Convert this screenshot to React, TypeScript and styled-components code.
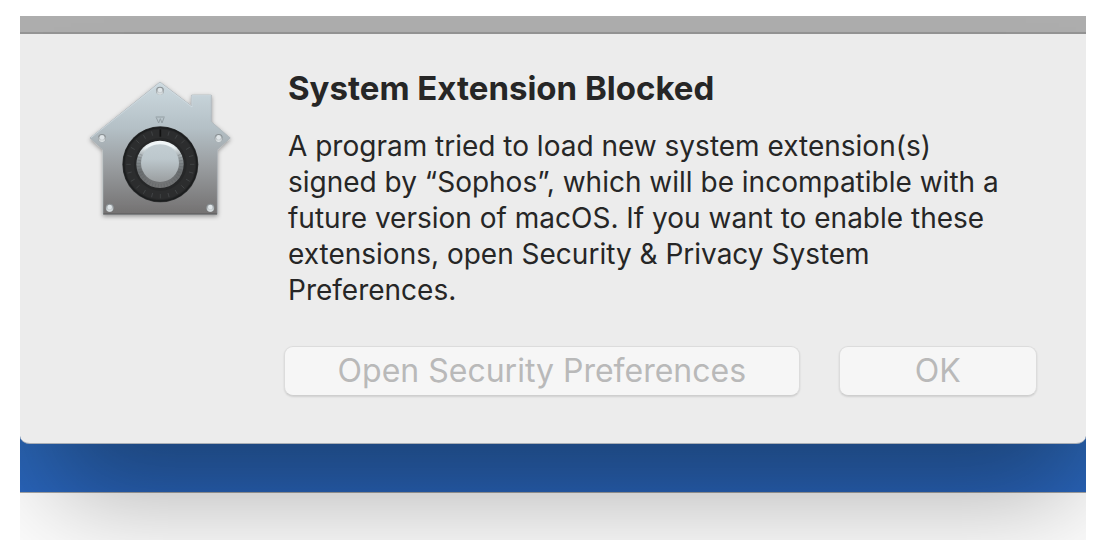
import React from "react";
import styled, { createGlobalStyle } from "styled-components";

const GlobalStyle = createGlobalStyle`
  body {
    margin: 0;
    background: #fff;
    font-family: Inter, "Liberation Sans", sans-serif;
  }
  * { box-sizing: border-box; }
`;

const Page = styled.main`
  padding: 16px 24px 12px 20px;
`;

const Desktop = styled.div`
  display: flex;
  flex-direction: column;
  overflow: hidden;
`;

const TitleBar = styled.div`
  height: 18px;
  background: #adadad;
  border-bottom: 2px solid #949494;
`;

const Dialog = styled.section`
  position: relative;
  z-index: 1;
  display: flex;
  gap: 44px;
  padding: 34px 49px 47px 60px;
  background: #ececec;
  border-bottom: 1px solid #a9aeb6;
  border-radius: 0 0 10px 10px / 0 0 8px 8px;
  box-shadow: 12px 76px 100px -22px rgba(0, 0, 0, 0.31);
`;

const HouseIcon = styled.svg`
  flex: none;
  width: 160px;
  height: 160px;
  margin-top: 2px;
`;

const Content = styled.div`
  flex: 1;
  min-width: 0;
`;

const Title = styled.h1`
  margin: 0;
  padding: 0 4px;
  font-size: 33px;
  line-height: 40px;
  font-weight: 700;
  color: #262626;
`;

const Message = styled.p`
  margin: 20px 0 0;
  padding: 0 24px 0 4px;
  font-size: 28px;
  line-height: 36px;
  color: #262626;
`;

const Actions = styled.div`
  display: grid;
  grid-template-columns: 13fr 5fr;
  gap: 39px;
  margin-top: 38px;
`;

const PushButton = styled.button`
  height: 50px;
  padding: 0;
  border: 1px solid #dcdcdc;
  border-bottom-color: #cfcfcf;
  border-radius: 9px;
  background: #f6f6f6;
  box-shadow: 0 1px 2px rgba(0, 0, 0, 0.12);
  font-family: inherit;
  font-size: 32px;
  line-height: 40px;
  color: #b9b9b9;
`;

const BlueBand = styled.div`
  height: 58px;
  margin-top: -10px;
  background: linear-gradient(#2962ae, #2964ba);
`;

const LowerPane = styled.div`
  height: 48px;
  border-top: 1px solid #a6a6a6;
  background: #fdfdfd;
`;

const ticks = Array.from({ length: 24 }, (_, i) => i * 15);
const rivets = [[240, 62], [66, 204], [416, 204], [89, 413], [391, 413]];

function SecurityHouse() {
  return (
    <HouseIcon viewBox="0 0 480 480" role="img" aria-label="Security">
      <defs>
        <linearGradient id="plate" x1="0" y1="0" x2="0" y2="1">
          <stop offset="0" stopColor="#cddae0" />
          <stop offset="0.35" stopColor="#b4c0c6" />
          <stop offset="0.62" stopColor="#9b9fa2" />
          <stop offset="1" stopColor="#737171" />
        </linearGradient>
        <linearGradient id="knob" x1="0" y1="0" x2="0" y2="1">
          <stop offset="0" stopColor="#c3ced3" />
          <stop offset="0.4" stopColor="#bcc7cc" />
          <stop offset="1" stopColor="#9a9ea0" />
        </linearGradient>
        <linearGradient id="rim" x1="0" y1="0" x2="0" y2="1">
          <stop offset="0" stopColor="#f8fcfd" />
          <stop offset="0.16" stopColor="#dbe3e6" />
          <stop offset="0.4" stopColor="#8c9396" />
          <stop offset="0.65" stopColor="#6a6e70" />
          <stop offset="1" stopColor="#747576" />
        </linearGradient>
        <linearGradient id="rivet" x1="0" y1="0" x2="0" y2="1">
          <stop offset="0" stopColor="#8b9295" />
          <stop offset="0.5" stopColor="#b4babd" />
          <stop offset="1" stopColor="#e4eaec" />
        </linearGradient>
        <filter id="drop" x="-10%" y="-10%" width="120%" height="125%">
          <feDropShadow dx="0" dy="5" stdDeviation="6" floodOpacity="0.38" />
        </filter>
      </defs>
      <path
        d="M240 36 L335 108 V75 H394 V155 L451 204 L412 239 V433 H69 V239 L30 204 Z"
        fill="url(#plate)"
        stroke="#a7afb3"
        strokeWidth="2"
        filter="url(#drop)"
      />
      <path d="M33 203 L240 39 L336 111 V77 H393" fill="none" stroke="#d5e0e5" strokeWidth="2" />
      <path d="M70 432 H411" stroke="#555454" strokeWidth="3" />
      <path d="M227 141 H254 M229 143 L236 159 L241 146 L246 159 L252 143" fill="none" stroke="#939ea3" strokeWidth="3" />
      {rivets.map(([x, y]) => (
        <g key={`${x}-${y}`}>
          <circle cx={x} cy={y} r="12" fill="#899093" />
          <circle cx={x} cy={y + 1} r="11" fill="url(#rivet)" />
          <circle cx={x} cy={y - 2} r="7" fill="#dfe5e8" />
        </g>
      ))}
      <circle cx="241" cy="283" r="114" fill="#303132" />
      <circle cx="241" cy="283" r="110" fill="#262728" stroke="#1b1d1e" strokeWidth="4" />
      <circle cx="241" cy="283" r="92" fill="none" stroke="#2c2d2e" strokeWidth="26" />
      {ticks.map((angle) => (
        <path
          key={angle}
          d={angle === 0 ? "M241 178 V200" : "M241 181 V194"}
          stroke={angle === 0 ? "#111" : "#484b4d"}
          strokeWidth={angle === 0 ? 5 : 2}
          transform={`rotate(${angle} 241 283)`}
        />
      ))}
      <circle cx="240" cy="283" r="71" fill="url(#rim)" />
      <path
        d="M184 253 A64 64 0 1 0 296 253"
        fill="none"
        stroke="#555a5c"
        strokeOpacity="0.3"
        strokeWidth="11"
        strokeDasharray="3 6"
      />
      <circle cx="240" cy="279" r="57" fill="url(#knob)" />
      <path d="M190 240 A64 64 0 0 1 290 240 A82 82 0 0 0 190 240" fill="#f1f7f9" />
    </HouseIcon>
  );
}

export default function App() {
  return (
    <Page>
      <GlobalStyle />
      <Desktop>
        <TitleBar />
        <Dialog role="alertdialog" aria-labelledby="title" aria-describedby="message">
          <SecurityHouse />
          <Content>
            <Title id="title">System Extension Blocked</Title>
            <Message id="message">
              A program tried to load new system extension(s) signed by “Sophos”, which will be
              incompatible with a future version of macOS. If you want to enable these extensions,
              open Security &amp; Privacy System Preferences.
            </Message>
            <Actions>
              <PushButton type="button" disabled>Open Security Preferences</PushButton>
              <PushButton type="button" disabled>OK</PushButton>
            </Actions>
          </Content>
        </Dialog>
        <BlueBand />
        <LowerPane />
      </Desktop>
    </Page>
  );
}
